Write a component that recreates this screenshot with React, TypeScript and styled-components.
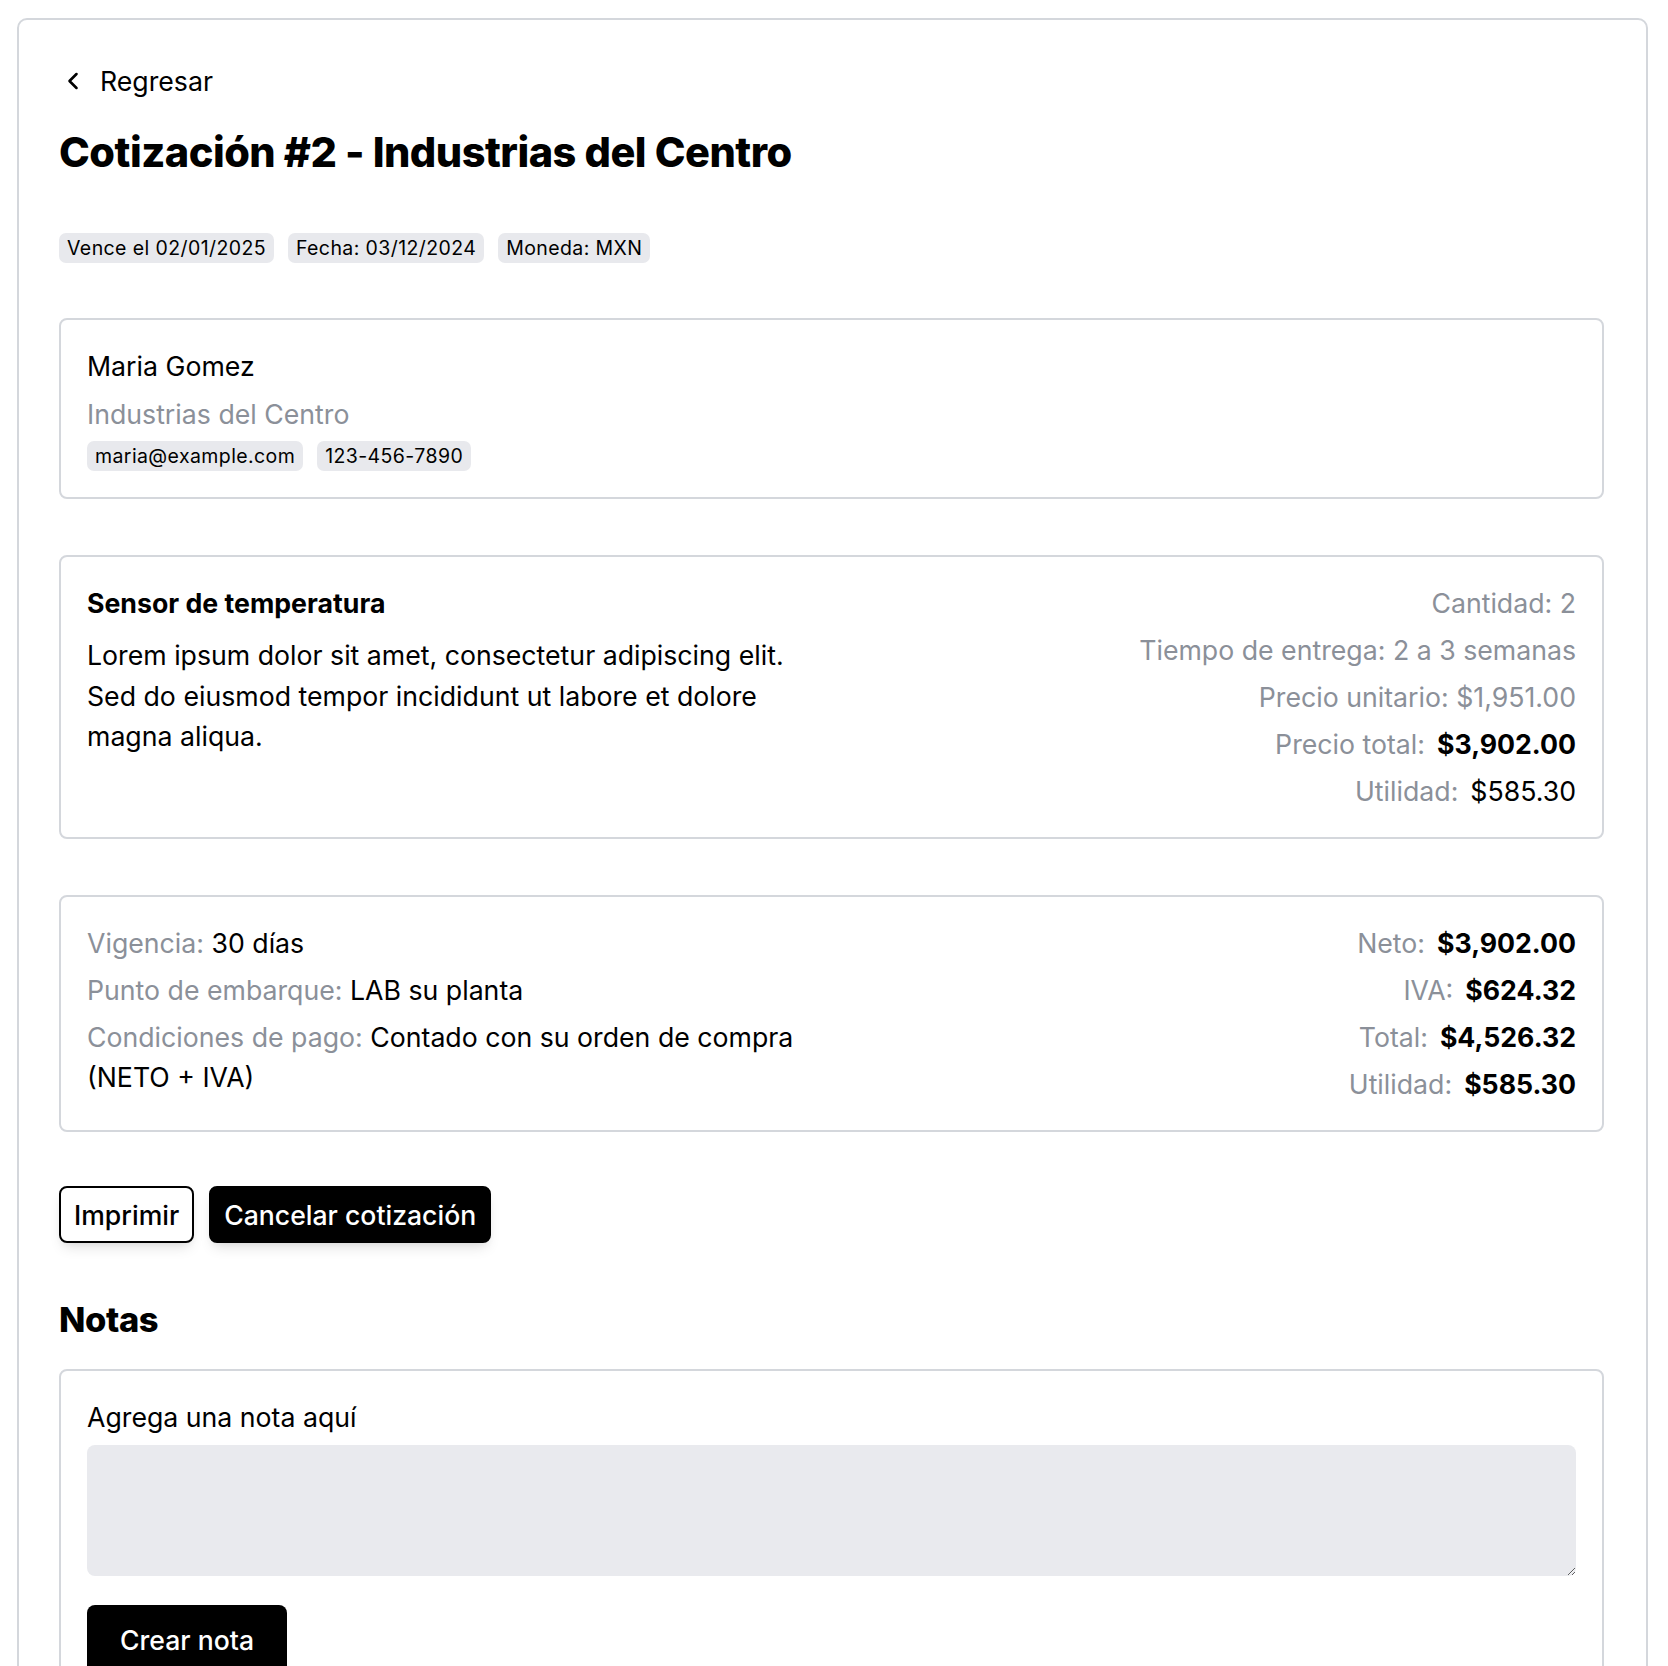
import React from "react";
import styled, { createGlobalStyle } from "styled-components";
import { ChevronLeft } from "lucide-react";

const GlobalStyle = createGlobalStyle`
  * { box-sizing: border-box; }
  body {
    margin: 0;
    background: #ffffff;
    color: #000000;
    font-family: Inter, "Noto Sans", "Liberation Sans", sans-serif;
    font-size: 26.7px;
    line-height: 40px;
  }
`;

const Page = styled.div`
  padding: 18px 20px 0 17px;
`;

const Frame = styled.main`
  border: 2px solid #d4d7dc;
  border-radius: 10px;
  padding: 41px 42px 40px 40px;
  display: flex;
  flex-direction: column;
`;

const BackLink = styled.a`
  display: flex;
  align-items: center;
  gap: 13px;
  height: 40px;
  color: #000;
  text-decoration: none;
  font-size: 26.7px;
  cursor: pointer;
  svg { flex: none; }
`;

const Title = styled.h1`
  margin: 25px 0 0;
  font-size: 41.5px;
  line-height: 52px;
  font-weight: 800;
  letter-spacing: -0.5px;
`;

const ChipRow = styled.div<{ $top?: number }>`
  display: flex;
  flex-wrap: wrap;
  gap: 14px;
  margin-top: ${(p) => p.$top ?? 0}px;
`;

const Chip = styled.span`
  display: inline-block;
  background: #e8e9ed;
  border-radius: 7px;
  padding: 4px 8px;
  font-size: 19.5px;
  line-height: 22px;
  letter-spacing: 0.4px;
`;

const Stack = styled.div`
  display: flex;
  flex-direction: column;
  gap: 56px;
  margin-top: 55px;
`;

const Card = styled.section`
  border: 2px solid #d4d7dc;
  border-radius: 8px;
  padding: 26px;
`;

const TwoCol = styled.div`
  display: grid;
  grid-template-columns: 1fr 1fr;
  column-gap: 24px;
`;

const Column = styled.div<{ $align?: "start" | "end" }>`
  display: flex;
  flex-direction: column;
  align-items: ${(p) => (p.$align === "end" ? "flex-end" : "flex-start")};
  text-align: ${(p) => (p.$align === "end" ? "right" : "left")};
  gap: 7px;
`;

const Name = styled.div`
  line-height: 40px;
`;

const Muted = styled.div`
  color: #8b9099;
  margin-top: 8px;
`;

const ItemName = styled.h3`
  margin: 0;
  font-size: 26.7px;
  line-height: 40px;
  font-weight: 700;
`;

const Description = styled.p`
  margin: 12px 0 0;
  line-height: 40.5px;
`;

const Row = styled.div`
  display: flex;
  justify-content: flex-end;
  gap: 12px;
  color: #8b9099;
`;

const Value = styled.span<{ $bold?: boolean }>`
  color: #000;
  font-weight: ${(p) => (p.$bold ? 700 : 400)};
`;

const Term = styled.div`
  color: #000;
`;

const Label = styled.span`
  color: #8b9099;
`;

const Actions = styled.div`
  display: flex;
  gap: 15px;
  margin-top: -2px;
`;

const Button = styled.button<{ $variant?: "outline" | "solid" }>`
  font-family: inherit;
  font-size: 26.6px;
  font-weight: 500;
  height: 57px;
  padding: 0 13px;
  border-radius: 8px;
  border: 2px solid #000;
  background: ${(p) => (p.$variant === "solid" ? "#000" : "#fff")};
  color: ${(p) => (p.$variant === "solid" ? "#fff" : "#000")};
  box-shadow: 0 8px 14px -4px rgba(0, 0, 0, 0.12), 0 4px 8px -4px rgba(0, 0, 0, 0.08);
  cursor: pointer;
`;

const NotesSection = styled.section`
  display: flex;
  flex-direction: column;
  gap: 28px;
`;

const SectionTitle = styled.h2`
  margin: 0;
  font-size: 34.5px;
  line-height: 42px;
  font-weight: 800;
  letter-spacing: -0.4px;
`;

const NoteLabel = styled.label`
  display: block;
  line-height: 40px;
  margin-bottom: 8px;
`;

const NoteInput = styled.textarea`
  display: block;
  width: 100%;
  height: 131px;
  background: #e9eaee;
  border: none;
  border-radius: 8px;
  resize: vertical;
  font-family: inherit;
  font-size: 26.7px;
  padding: 12px;
  outline: none;
`;

const CreateButton = styled.button`
  margin-top: 29px;
  font-family: inherit;
  font-size: 26.6px;
  font-weight: 500;
  height: 70px;
  padding: 0 33px;
  border: none;
  border-radius: 8px;
  background: #000;
  color: #fff;
  cursor: pointer;
`;

export default function App() {
  return (
    <Page>
      <GlobalStyle />
      <Frame>
        <BackLink>
          <ChevronLeft size={28} strokeWidth={2.2} />
          Regresar
        </BackLink>
        <Title>Cotización #2 - Industrias del Centro</Title>
        <ChipRow $top={55}>
          <Chip>Vence el 02/01/2025</Chip>
          <Chip>Fecha: 03/12/2024</Chip>
          <Chip>Moneda: MXN</Chip>
        </ChipRow>

        <Stack>
          <Card>
            <Name>Maria Gomez</Name>
            <Muted>Industrias del Centro</Muted>
            <ChipRow $top={7}>
              <Chip>maria@example.com</Chip>
              <Chip>123-456-7890</Chip>
            </ChipRow>
          </Card>

          <Card>
            <TwoCol>
              <div>
                <ItemName>Sensor de temperatura</ItemName>
                <Description>
                  Lorem ipsum dolor sit amet, consectetur adipiscing elit. Sed do eiusmod tempor
                  incididunt ut labore et dolore magna aliqua.
                </Description>
              </div>
              <Column $align="end">
                <Row>Cantidad: 2</Row>
                <Row>Tiempo de entrega: 2 a 3 semanas</Row>
                <Row>Precio unitario: $1,951.00</Row>
                <Row>
                  Precio total: <Value $bold>$3,902.00</Value>
                </Row>
                <Row>
                  Utilidad: <Value>$585.30</Value>
                </Row>
              </Column>
            </TwoCol>
          </Card>

          <Card>
            <TwoCol>
              <Column>
                <Term>
                  <Label>Vigencia:</Label> 30 días
                </Term>
                <Term>
                  <Label>Punto de embarque:</Label> LAB su planta
                </Term>
                <Term>
                  <Label>Condiciones de pago:</Label> Contado con su orden de compra (NETO + IVA)
                </Term>
              </Column>
              <Column $align="end">
                <Row>
                  Neto: <Value $bold>$3,902.00</Value>
                </Row>
                <Row>
                  IVA: <Value $bold>$624.32</Value>
                </Row>
                <Row>
                  Total: <Value $bold>$4,526.32</Value>
                </Row>
                <Row>
                  Utilidad: <Value $bold>$585.30</Value>
                </Row>
              </Column>
            </TwoCol>
          </Card>

          <Actions>
            <Button $variant="outline">Imprimir</Button>
            <Button $variant="solid">Cancelar cotización</Button>
          </Actions>

          <NotesSection>
            <SectionTitle>Notas</SectionTitle>
            <Card>
              <NoteLabel htmlFor="nota">Agrega una nota aquí</NoteLabel>
              <NoteInput id="nota" />
              <CreateButton>Crear nota</CreateButton>
            </Card>
          </NotesSection>
        </Stack>
      </Frame>
    </Page>
  );
}
